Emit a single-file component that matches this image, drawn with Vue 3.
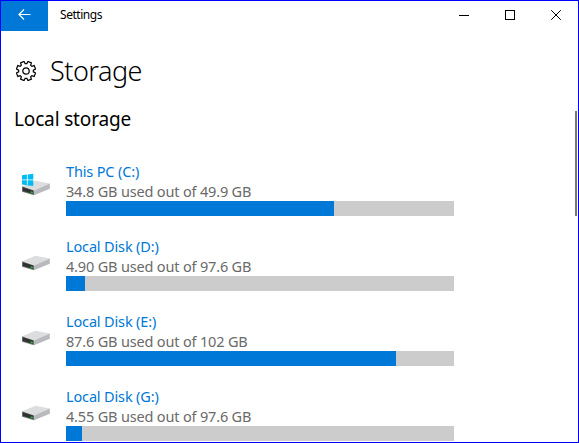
<template>
  <div class="window">
    <header class="titlebar">
      <button class="back-btn" type="button" aria-label="Back">
        <svg width="13" height="12" viewBox="0 0 13 12">
          <path d="M12.5 5.5H1M6 0.5l-5 5 5 5" />
        </svg>
      </button>
      <span class="app-name">Settings</span>
      <div class="controls">
        <button type="button" aria-label="Minimize">
          <svg width="10" height="10" viewBox="0 0 10 10" shape-rendering="crispEdges">
            <path d="M0 5.5h10" />
          </svg>
        </button>
        <button type="button" aria-label="Maximize">
          <svg width="10" height="10" viewBox="0 0 10 10" shape-rendering="crispEdges">
            <path d="M0.5 0.5h9v9h-9z" />
          </svg>
        </button>
        <button type="button" aria-label="Close">
          <svg width="10" height="10" viewBox="0 0 10 10">
            <path d="M0.2 0.2l9.6 9.6M9.8 0.2L0.2 9.8" />
          </svg>
        </button>
      </div>
    </header>

    <div class="page-head">
      <svg class="gear" width="20" height="20" viewBox="0 0 20 20">
        <path :d="gearPath" />
        <circle cx="10" cy="10" r="3.2" />
      </svg>
      <h1>Storage</h1>
    </div>

    <main class="content">
      <h2>Local storage</h2>
      <ul class="drives">
        <li v-for="drive in drives" :key="drive.name" class="drive">
          <svg class="drive-icon" width="30" height="28" viewBox="0 0 30 28">
            <path class="top" d="M1 13.2L14.5 7.8l14.3 2.6L13 17.4z" />
            <path class="side" d="M13 17.4l15.8-7v5.4L13 22.2z" />
            <path class="front" d="M1 13.2l12 4.2v4.8L1 18.8z" />
            <path class="slot" d="M1.8 14.2l10.4 3.4v3.4L1.8 18z" />
            <path class="led" d="M9.6 18.2l2.2.5v1.8l-2.2-.5z" />
            <g v-if="drive.system" class="logo">
              <path d="M1 2.2l4.9-.7v5H1zM6.7 1.4L12.3.7v5.8H6.7zM1 7.3h4.9v5L1 11.6zM6.7 7.3h5.6v5.8l-5.6-.7z" />
            </g>
          </svg>
          <div class="info">
            <a class="name">{{ drive.name }}</a>
            <span class="usage">{{ drive.used }} GB used out of {{ drive.total }} GB</span>
            <div class="bar">
              <div class="fill" :style="{ width: drive.fill + 'px' }"></div>
            </div>
          </div>
        </li>
      </ul>
    </main>
    <div class="scrollbar"></div>
  </div>
</template>

<script setup>
const drives = [
  { name: 'This PC (C:)', used: '34.8', total: '49.9', fill: 268, system: true },
  { name: 'Local Disk (D:)', used: '4.90', total: '97.6', fill: 19 },
  { name: 'Local Disk (E:)', used: '87.6', total: '102', fill: 330 },
  { name: 'Local Disk (G:)', used: '4.55', total: '97.6', fill: 16 }
]

// eight teeth around the centre
const point = (radius, deg) => {
  const a = (deg * Math.PI) / 180
  return `${(10 + radius * Math.cos(a)).toFixed(2)} ${(10 + radius * Math.sin(a)).toFixed(2)}`
}
const teeth = []
for (let i = 0; i < 8; i++) {
  const c = i * 45 + 22.5
  teeth.push(point(9.8, c - 11), point(9.8, c + 11), point(7.4, c + 16), point(7.4, c + 29))
}
const gearPath = `M${teeth.join('L')}Z`
</script>

<style>
body {
  background: #fff;
  overflow: hidden;
}
</style>

<style scoped>
.window {
  position: relative;
  box-sizing: border-box;
  width: 579px;
  height: 443px;
  border: 1px solid #0000ff;
  overflow: hidden;
  background: #fff;
  color: #000;
  font-family: "Noto Sans", "Open Sans", sans-serif;
}

.titlebar {
  display: flex;
  height: 30px;
}

button {
  display: flex;
  align-items: center;
  justify-content: center;
  width: 46px;
  height: 28px;
  padding: 0;
  border: none;
  background: transparent;
}

.back-btn {
  width: 47px;
  height: 30px;
  background: #0078d7;
}

svg {
  display: block;
  fill: none;
  stroke: #000;
  stroke-width: 1;
}

.back-btn svg {
  margin-bottom: 2px;
  stroke: #fff;
  stroke-width: 1.2;
}

.app-name {
  flex: 1;
  margin-left: 12px;
  font-size: 12px;
  line-height: 28px;
  letter-spacing: -0.45px;
}

.controls {
  display: flex;
  margin-right: -1px;
}

.page-head {
  display: flex;
  align-items: center;
  height: 40px;
  margin-top: 20px;
  padding-left: 15px;
}

.gear {
  stroke-width: 1.2;
}

h1 {
  margin: 0 0 0 14px;
  font-size: 27px;
  font-weight: 300;
  line-height: 40px;
  letter-spacing: -0.5px;
}

h2 {
  margin: 14px 0 0 13px;
  font-size: 19px;
  font-weight: 400;
  line-height: 28px;
  letter-spacing: -0.15px;
}

.drives {
  margin: 28px 0 0;
  padding: 0;
  list-style: none;
}

.drive {
  display: flex;
  height: 75px;
}

.drive-icon {
  flex: none;
  margin: 12px 15px 0 20px;
  stroke: none;
}

.top {
  fill: #dcdddf;
}

.side {
  fill: #b9babd;
}

.front {
  fill: #77787a;
}

.slot {
  fill: #303131;
}

.led {
  fill: #22b43a;
}

.logo {
  fill: #00bcf2;
}

.info {
  display: flex;
  flex-direction: column;
  width: 388px;
  font-size: 14.5px;
  line-height: 20px;
  white-space: nowrap;
}

.name {
  color: #0078d7;
  letter-spacing: -0.15px;
}

.usage {
  color: #6a6a6a;
  letter-spacing: -0.17px;
}

.bar {
  height: 15px;
  background: #ccc;
}

.fill {
  height: 100%;
  background: #0078d7;
}

/* thin indicator over the right edge */
.scrollbar {
  position: absolute;
  top: 110px;
  right: 1px;
  width: 2px;
  height: 105px;
  background: #767676;
}
</style>
